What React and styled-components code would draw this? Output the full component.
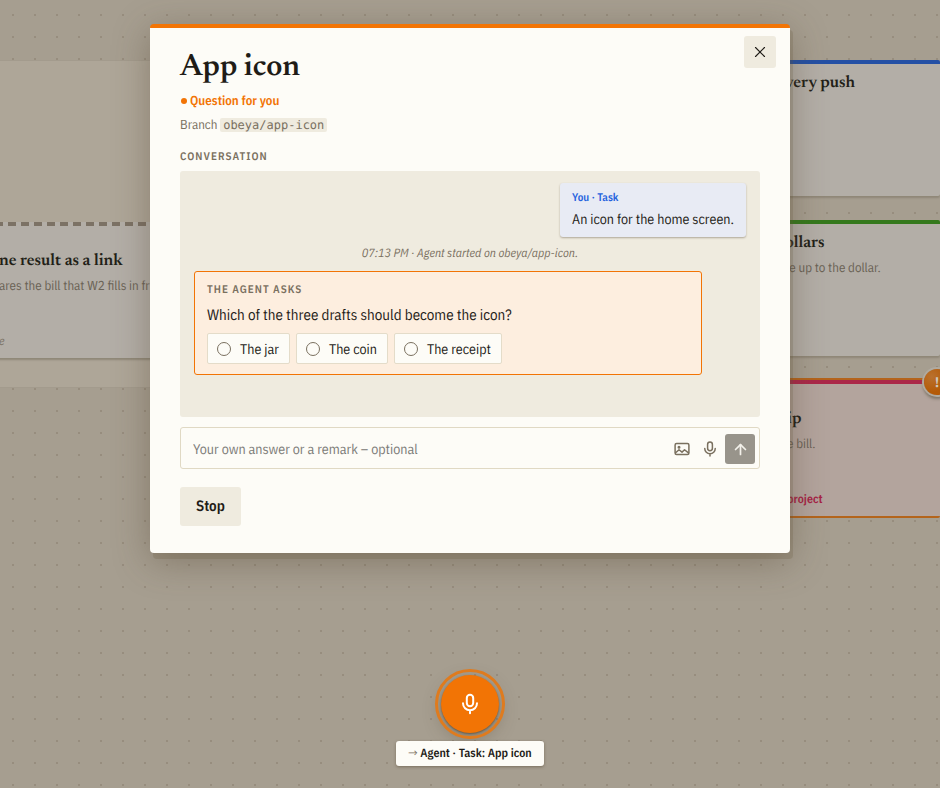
import React, { useState } from 'react';
import styled, { createGlobalStyle, css } from 'styled-components';
import { ArrowUp, X } from 'lucide-react';

const sans = '"IBM Plex Sans Condensed", "Roboto Condensed", "Liberation Sans", sans-serif';
const serif = 'Newsreader, "Liberation Serif", serif';
const mono = '"DejaVu Sans Mono", monospace';

const GlobalStyle = createGlobalStyle`
  * {
    box-sizing: border-box;
  }

  body {
    margin: 0;
    font-family: ${sans};
    font-size: 14px;
    line-height: 22px;
    color: #1f1c17;
    background: #a69e90;
    text-rendering: geometricPrecision;
  }

  h1, h2, h3, p {
    margin: 0;
  }

  button, input {
    font: inherit;
    color: inherit;
    text-rendering: inherit;
  }
`;

const Board = styled.div`
  position: relative;
  min-height: 100vh;
  overflow: hidden;
  background-color: #a69e90;
  background-image: radial-gradient(circle, #978d7e 1px, transparent 1px);
  background-size: 22px 22px;
  background-position: 2px 4px;
`;

const Area = styled.section`
  position: absolute;
  top: 60px;
  left: 0;
  width: 300px;
  height: 328px;
  background: #aea698;
  border: 1px solid #a39b8d;
  border-left: 0;
`;

const tones = {
  blue: css`
    border-top: 4px solid #2450a5;
  `,
  green: css`
    border-top: 4px solid #35791d;
  `,
  dashed: css`
    background: #b3aea7 repeating-linear-gradient(90deg, #7c7265 0 8px, transparent 8px 13px) 1px 0 / 100% 4px no-repeat;
    padding-left: 5px;
  `,
  pink: css`
    background: #b3a49d;
    border-top: 4px solid #ab2849;
    border-bottom: 2px solid #b4641c;
    box-shadow: 0 -2px 0 #b4641c;
  `,
};

const Card = styled.article`
  position: absolute;
  top: ${props => props.$top}px;
  left: ${props => props.$left}px;
  right: ${props => props.$right}px;
  width: ${props => props.$width}px;
  height: ${props => props.$height}px;
  padding-top: ${props => props.$pad}px;
  background: #b3aea7;
  border-radius: 2px;
  box-shadow: 0 2px 2px #8f8778;
  white-space: nowrap;
  ${props => tones[props.$tone]}
`;

const CardTitle = styled.h3`
  font: 600 17px/24px ${serif};
  color: #221f17;
`;

const CardText = styled.p`
  font-size: 13px;
  line-height: 24px;
  color: #6a6255;
`;

const CardTag = styled.p`
  margin-top: 32px;
  font-size: 12px;
  line-height: 24px;
  font-weight: 600;
  color: #a62345;
`;

const CardNote = styled(CardTag)`
  font-style: italic;
  font-weight: 400;
  color: #7a7265;
`;

const Alert = styled.span`
  position: absolute;
  top: -15px;
  right: -10px;
  width: 26px;
  height: 26px;
  border-radius: 50%;
  background: radial-gradient(circle at 30% 30%, #b9712f, #b45a06 60%);
  box-shadow: 0 0 0 2px #b0aaa0, 0 3px 3px 1px #7e7567;
  color: #cfc8be;
  font-weight: 700;
  line-height: 26px;
  text-align: center;
`;

const Overlay = styled.div`
  position: absolute;
  inset: 0;
  display: flex;
  align-items: flex-start;
  justify-content: center;
  padding: 24px;
`;

const Dialog = styled.main`
  position: relative;
  width: 100%;
  max-width: 640px;
  padding: 23px 30px 27px;
  background: #fdfcf7;
  border-top: 4px solid #f27405;
  border-radius: 4px;
  box-shadow: 3px 6px 0 rgba(100, 84, 55, 0.2), 0 8px 36px rgba(80, 66, 44, 0.4);
`;

const CloseButton = styled.button`
  position: absolute;
  top: 8px;
  right: 14px;
  display: grid;
  place-items: center;
  width: 32px;
  height: 32px;
  padding: 0;
  border: 0;
  border-radius: 3px;
  background: #efebdf;
`;

const Title = styled.h1`
  font: 600 31px/36px ${serif};
`;

const Status = styled.p`
  display: flex;
  align-items: center;
  gap: 3px;
  margin-top: 3px;
  font-size: 13px;
  font-weight: 600;
  color: #f27405;

  &::before {
    content: '';
    width: 6px;
    height: 6px;
    margin-left: 1px;
    border-radius: 50%;
    background: currentColor;
  }
`;

const Branch = styled.p`
  margin: 2px 0 13px;
  font-size: 13px;
  color: #7a705f;

  code {
    padding: 0 3px;
    border-radius: 2px;
    background: #efebdf;
    font: 12px/14px ${mono};
  }
`;

const Label = styled.h2`
  font-size: 11px;
  line-height: 16px;
  font-weight: 600;
  letter-spacing: 1px;
  text-transform: uppercase;
  color: #7a705f;
`;

const Conversation = styled.section`
  display: flex;
  flex-direction: column;
  min-height: 246px;
  margin-top: 6px;
  padding: 12px 14px;
  border-radius: 3px;
  background: #efebdf;
`;

const Message = styled.div`
  align-self: flex-end;
  padding: 6px 12px 7px;
  border-radius: 3px;
  background: #e8ebf4;
  box-shadow: 0 1px 2px rgba(80, 66, 44, 0.4);
`;

const Sender = styled.p`
  font-size: 11px;
  line-height: 19px;
  font-weight: 600;
  color: #2563de;
`;

const Event = styled.p`
  margin: 6px 0;
  font-size: 12px;
  font-style: italic;
  text-align: center;
  color: #7a705f;
`;

const Question = styled.form`
  width: 92%;
  padding: 10px 12px;
  border: 1px solid #f27405;
  border-radius: 3px;
  background: #fdeedf;
`;

const QuestionText = styled.p`
  margin: 7px 0 6px;
  font-size: 15px;
`;

const Options = styled.div`
  display: flex;
  flex-wrap: wrap;
  gap: 6px;
`;

const Option = styled.label`
  display: flex;
  align-items: center;
  gap: 9px;
  height: 31px;
  padding: 0 10px 0 9px;
  border: 1px solid #e4dcc9;
  border-radius: 2px;
  background: #fdfcf7;
  font-size: 14px;

  input {
    appearance: none;
    width: 14px;
    height: 14px;
    margin: 0;
    border: 1px solid #7a705f;
    border-radius: 50%;
  }

  input:checked {
    background: #f27405;
  }
`;

const Composer = styled.form`
  display: flex;
  align-items: center;
  margin-top: 10px;
  padding: 6px 4px 4px 12px;
  border: 1px solid #e0d9c4;
  border-radius: 3px;

  input {
    flex: 1;
    min-width: 0;
    padding: 0;
    border: 0;
    outline: 0;
    background: none;
  }

  input::placeholder {
    color: #7c7b78;
    opacity: 1;
  }
`;

const IconButton = styled.button`
  display: grid;
  place-items: center;
  width: 28px;
  height: 30px;
  padding: 0;
  border: 0;
  background: none;
  color: #7a705f;
`;

const SendButton = styled(IconButton)`
  width: 30px;
  margin-left: 1px;
  border-radius: 3px;
  background: #98948b;
  color: #f3f1ea;
`;

const StopButton = styled.button`
  height: 39px;
  margin-top: 18px;
  padding: 1px 16px 0;
  border: 0;
  border-radius: 3px;
  background: #efebdf;
  font-size: 15px;
  font-weight: 600;
`;

const VoiceDock = styled.div`
  position: absolute;
  left: 0;
  right: 0;
  bottom: 22px;
  display: flex;
  flex-direction: column;
  align-items: center;
  gap: 8px;
`;

const VoiceButton = styled.button`
  display: grid;
  place-items: center;
  width: 58px;
  height: 58px;
  padding: 0;
  border: 0;
  border-radius: 50%;
  outline: 3px solid #df7b1e;
  outline-offset: 3px;
  background: #f27405;
  box-shadow: 0 1px 2px rgba(60, 48, 30, 0.5), 0 6px 18px rgba(80, 66, 44, 0.35);
  color: #fff;
`;

const Target = styled.p`
  padding: 2px 12px 1px;
  border-radius: 3px;
  background: #fdfcf7;
  box-shadow: 0 1px 3px rgba(80, 66, 44, 0.5);
  font-size: 12px;
  font-weight: 600;

  span {
    font-weight: 400;
    color: #7a705f;
  }
`;

const Glyph = styled.svg`
  fill: none;
  stroke: currentColor;
  stroke-width: 2;
  stroke-linecap: round;
  stroke-linejoin: round;
`;

const MicIcon = ({ size }) => (
  <Glyph width={size} height={size} viewBox="0 0 24 24">
    <rect x="8.8" y="2.8" width="6.4" height="11.4" rx="3.2" />
    <path d="M5 11.3a7 7 0 0 0 14 0M12 18.3v3" />
  </Glyph>
);

const ImageIcon = ({ size }) => (
  <Glyph width={size} height={size} viewBox="0 0 24 24">
    <rect x="2.8" y="4.8" width="18.4" height="14.4" rx="2" />
    <circle cx="8" cy="9.6" r="1" />
    <path d="M3.5 17l4.5-4 4 3.2 3.4-3.2 5.2 4.2" />
  </Glyph>
);

const answers = ['The jar', 'The coin', 'The receipt'];

export default function App() {
  const [answer, setAnswer] = useState('');
  const [remark, setRemark] = useState('');

  return (
    <Board>
      <GlobalStyle />
      <Area />
      <Card $tone="dashed" $top={222} $left={-6} $width={300} $height={136} $pad={28}>
        <CardTitle>ne result as a link</CardTitle>
        <CardText>ares the bill that W2 fills in fr</CardText>
        <CardNote>e</CardNote>
      </Card>
      <Card $tone="blue" $top={60} $right={0} $width={155} $height={136} $pad={8}>
        <CardTitle>very push</CardTitle>
      </Card>
      <Card $tone="green" $top={220} $right={0} $width={155} $height={136} $pad={8}>
        <CardTitle>ollars</CardTitle>
        <CardText>re up to the dollar.</CardText>
      </Card>
      <Card $tone="pink" $top={380} $right={0} $width={153} $height={138} $pad={24}>
        <CardTitle>ip</CardTitle>
        <CardText>e bill.</CardText>
        <CardTag>project</CardTag>
        <Alert>!</Alert>
      </Card>
      <Overlay>
        <Dialog role="dialog" aria-labelledby="task-title">
          <CloseButton aria-label="Close">
            <X size={18} strokeWidth={1.5} />
          </CloseButton>
          <Title id="task-title">App icon</Title>
          <Status>Question for you</Status>
          <Branch>Branch <code>obeya/app-icon</code></Branch>
          <Label>Conversation</Label>
          <Conversation>
            <Message>
              <Sender>You · Task</Sender>
              <p>An icon for the home screen.</p>
            </Message>
            <Event>07:13 PM · Agent started on obeya/app-icon.</Event>
            <Question>
              <Label as="h3">The agent asks</Label>
              <QuestionText>Which of the three drafts should become the icon?</QuestionText>
              <Options>
                {answers.map(item => (
                  <Option key={item}>
                    <input type="radio" name="answer" checked={answer === item} onChange={() => setAnswer(item)} />
                    {item}
                  </Option>
                ))}
              </Options>
            </Question>
          </Conversation>
          <Composer onSubmit={e => e.preventDefault()}>
            <input
              aria-label="Your own answer or a remark"
              placeholder="Your own answer or a remark – optional"
              value={remark}
              onChange={e => setRemark(e.target.value)}
            />
            <IconButton type="button" aria-label="Attach image"><ImageIcon size={18} /></IconButton>
            <IconButton type="button" aria-label="Dictate"><MicIcon size={18} /></IconButton>
            <SendButton aria-label="Send"><ArrowUp size={17} strokeWidth={2.4} /></SendButton>
          </Composer>
          <StopButton>Stop</StopButton>
        </Dialog>
      </Overlay>
      <VoiceDock>
        <VoiceButton aria-label="Speak"><MicIcon size={24} /></VoiceButton>
        <Target><span>→</span> Agent · Task: App icon</Target>
      </VoiceDock>
    </Board>
  );
}
